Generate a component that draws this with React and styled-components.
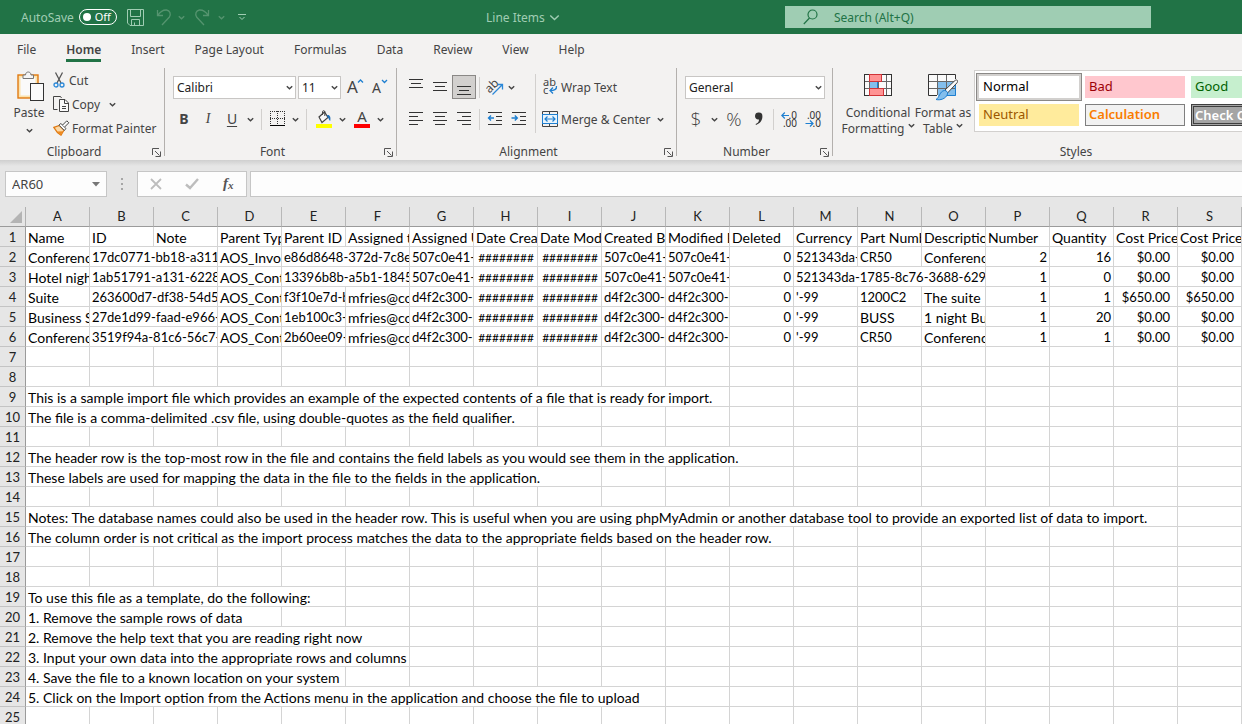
import { useState } from 'react';
import styled, { createGlobalStyle, css } from 'styled-components';

const GlobalStyle = createGlobalStyle`
	* {
		box-sizing: border-box;
	}
	body {
		margin: 0;
		overflow: hidden;
		background: #e6e6e6;
	}
	body, button, input, select {
		font-family: 'Noto Sans', 'Open Sans', sans-serif;
		font-size: 12px;
		color: #444;
	}
	button {
		padding: 0;
		border: none;
		background: none;
	}
`;

const Page = styled.div`
	display: flex;
	flex-direction: column;
	height: 100vh;
	overflow: hidden;
`;

// ---------- title bar ----------
const TitleBar = styled.header`
	display: grid;
	grid-template-columns: 486fr 299fr 366fr 91fr;
	align-items: center;
	flex: none;
	height: 34px;
	background: #217346;
	color: #a0cdb3;
`;

const QuickAccess = styled.div`
	display: flex;
	align-items: center;
	padding-left: 21px;
`;

const AutoSave = styled.label`
	display: flex;
	align-items: center;
	gap: 5px;
	margin-right: 5px;
	position: relative;
`;

const HiddenCheck = styled.input`
	position: absolute;
	opacity: 0;
`;

const Pill = styled.span`
	display: flex;
	align-items: center;
	justify-content: space-between;
	width: 38px;
	height: 16px;
	padding: 0 5px 0 3px;
	border: 1px solid #fff;
	border-radius: 8px;
	color: #fff;
	font-size: 11px;
	line-height: 14px;
	&::before {
		content: '';
		width: 8px;
		height: 8px;
		border-radius: 50%;
		background: #fff;
	}
`;

const QuickButton = styled.button`
	display: flex;
	align-items: center;
	justify-content: center;
	width: ${(props) => props.$w}px;
	height: 24px;
	color: ${(props) => (props.$dim ? '#55946f' : '#a0cdb3')};
`;

const DocTitle = styled.button`
	display: flex;
	align-items: center;
	gap: 4px;
	color: #a0cdb3;
	justify-self: start;
`;

const SearchBox = styled.label`
	display: flex;
	align-items: center;
	gap: 15px;
	height: 22px;
	padding-left: 18px;
	background: #9fcdb3;
	color: #217346;
`;

const SearchInput = styled.input`
	flex: 1;
	min-width: 0;
	border: none;
	outline: none;
	padding: 0;
	background: transparent;
	color: #217346;
	&::placeholder {
		color: #217346;
		opacity: 1;
	}
`;

// ---------- ribbon ----------
const Tabs = styled.nav`
	display: flex;
	flex: none;
	gap: 30px;
	height: 34px;
	padding: 6px 17px 0;
	background: #f3f2f1;
`;

const Tab = styled.button`
	height: 22px;
	line-height: 19px;
	padding-bottom: 3px;
	${(props) =>
		props.$active &&
		css`
			font-weight: 600;
			border-bottom: 3px solid #217346;
			padding-bottom: 0;
		`}
`;

const Ribbon = styled.section`
	display: flex;
	flex: none;
	height: 92px;
	background: #f3f2f1;
	overflow: hidden;
`;

// the divider stops a little above the bottom of the ribbon
const Group = styled.div`
	display: flex;
	flex-direction: column;
	flex: ${(props) => (props.$grow ? `1 0 ${props.$w}px` : `0 0 ${props.$w}px`)};
	height: 92px;
	background: linear-gradient(#b3b0ad, #b3b0ad) right top / 1px 88px no-repeat;
`;

const GroupBody = styled.div`
	display: flex;
	flex: 1;
	padding-left: ${(props) => props.$pad || 0}px;
`;

const GroupFooter = styled.div`
	display: flex;
	align-items: center;
	gap: 4px;
	height: 16px;
	line-height: 16px;
	button {
		display: flex;
		width: 13px;
	}
`;

const GroupLabel = styled.span`
	flex: 1;
	text-align: center;
`;

const Col = styled.div`
	display: flex;
	flex-direction: column;
	gap: ${(props) => props.$gap || 0}px;
	padding-top: ${(props) => props.$top || 0}px;
`;

const Row = styled.div`
	display: flex;
	align-items: center;
	height: 24px;
	padding-left: ${(props) => props.$pad || 0}px;
`;

const Tool = styled.button`
	display: flex;
	align-items: center;
	justify-content: center;
	width: ${(props) => props.$w || 24}px;
	height: 24px;
	${(props) =>
		props.$on &&
		css`
			background: #d2d0ce;
			border: 1px solid #8a8886;
		`}
`;

const Letter = styled.span`
	font-size: 14px;
	line-height: 20px;
	font-weight: ${(props) => (props.$bold ? 700 : 400)};
	font-style: ${(props) => (props.$italic ? 'italic' : 'normal')};
	font-family: ${(props) => (props.$italic ? "'Liberation Serif', serif" : 'inherit')};
	text-decoration: ${(props) => (props.$underline ? 'underline' : 'none')};
	text-underline-offset: 2px;
`;

const Glyph = styled.span`
	font-family: 'Open Sans', sans-serif;
	font-size: 19px;
	font-weight: 300;
	line-height: 24px;
`;

const LabelTool = styled.button`
	display: flex;
	align-items: center;
	gap: ${(props) => props.$gap || 3}px;
	height: 24px;
	white-space: nowrap;
`;

const LabelSplit = styled.div`
	display: flex;
	align-items: center;
`;

const PasteButton = styled.button`
	display: flex;
	flex-direction: column;
	align-items: center;
	width: 46px;
	height: 68px;
	margin: 3px 1px 0 6px;
	line-height: 18px;
	svg:first-child {
		margin-bottom: 2px;
	}
	svg:last-child {
		margin-top: 5px;
	}
`;

const BigTool = styled.button`
	display: flex;
	flex-direction: column;
	align-items: center;
	width: ${(props) => props.$w}px;
	height: 72px;
	padding-top: 5px;
	line-height: 16px;
	white-space: nowrap;
	svg:first-child {
		margin-bottom: 4px;
	}
`;

const Bar = styled.i`
	width: 1px;
	height: ${(props) => props.$h || 21}px;
	margin: 0 ${(props) => props.$m || 3}px;
	background: #d2d0ce;
`;

const SelectWrap = styled.span`
	display: flex;
	position: relative;
	width: ${(props) => props.$w}px;
	margin-right: 2px;
	svg {
		position: absolute;
		right: 3px;
		top: 8px;
		pointer-events: none;
	}
`;

const Select = styled.select`
	appearance: none;
	width: 100%;
	height: 23px;
	padding: 0 3px;
	border: 1px solid #c8c6c4;
	border-radius: 0;
	background: #fff;
	color: #222;
`;

const Gallery = styled.div`
	display: grid;
	grid-template-columns: repeat(3, 100px);
	grid-auto-rows: 22px;
	gap: 6px;
	flex: 1;
	height: 62px;
	margin: 2px 0 0 2px;
	padding: 5px 0 0 4px;
	border: 1px solid #d2d0ce;
	background: #fff;
`;

const StyleCell = styled.button`
	padding: 0 4px 2px;
	font-size: 13px;
	line-height: 18px;
	text-align: left;
	white-space: nowrap;
	overflow: hidden;
	font-weight: ${(props) => (props.$bold ? 600 : 400)};
	background: ${(props) => props.$bg};
	color: ${(props) => props.$color};
	border: ${(props) => props.$border || 'none'};
	padding-left: ${(props) => (props.$border ? 3 : 4)}px;
	outline: ${(props) => (props.$on ? '1px solid #8a8886' : 'none')};
	box-shadow: ${(props) => (props.$on ? '0 0 0 2px #d2d0ce' : 'none')};
	outline-offset: 2px;
`;

const CheckCell = styled(StyleCell)`
	padding: 0 1px;
	line-height: 16px;
`;

// ---------- formula bar ----------
const FormulaBar = styled.div`
	display: flex;
	align-items: center;
	flex: none;
	height: 47px;
	padding: 1px 0 0 5px;
	background: linear-gradient(#cfcfcf, #e6e6e6 6px);
`;

const Box = styled.div`
	display: flex;
	align-items: center;
	height: 26px;
	border: 1px solid #c6c6c6;
	background: #fdfdfd;
`;

const NameBox = styled(Box)`
	width: 102px;
	padding-right: 6px;
`;

const FormulaButtons = styled(Box)`
	width: 110px;
	margin-right: 3px;
`;

const FormulaField = styled(Box)`
	flex: 1;
	border-right: none;
`;

const PlainInput = styled.input`
	flex: 1;
	min-width: 0;
	padding: 0 6px;
	border: none;
	outline: none;
	background: transparent;
	font-size: 13px;
`;

const Dots = styled.svg`
	margin: 0 13px 0 14px;
`;

// ---------- sheet ----------
const Sheet = styled.main`
	flex: 1;
	overflow: hidden;
	background: #fff;
`;

const Grid = styled.table`
	width: 1242px;
	table-layout: fixed;
	border-collapse: separate;
	border-spacing: 0;
	font-family: Lato, 'Open Sans', sans-serif;
	font-size: 13px;
	line-height: 17px;
	color: #000;
`;

const Corner = styled.td`
	height: 20px;
	padding: 0;
	background: #e6e6e6;
	border-right: 1px solid #b1b1b1;
	border-bottom: 1px solid #9b9b9b;
	svg {
		display: block;
		margin: 0 0 0 10px;
	}
`;

const ColHead = styled.th`
	height: 20px;
	padding: 0;
	font-weight: 400;
	color: #222;
	background: #e6e6e6;
	border-right: 1px solid #b8b8b8;
	border-bottom: 1px solid #9b9b9b;
`;

const RowHead = styled.th`
	height: 20px;
	padding: 2px 0 0;
	font-weight: 400;
	color: #222;
	background: #e6e6e6;
	border-right: 1px solid #9b9b9b;
	border-bottom: 1px solid #c4c4c4;
`;

const Cell = styled.td`
	height: 20px;
	padding: 2px ${(props) => props.$right}px 0 2px;
	font-size: ${(props) => props.$size}px;
	text-align: ${(props) => props.$align};
	white-space: nowrap;
	overflow: hidden;
	border-right: 1px solid #d4d4d4;
	border-bottom: 1px solid #d4d4d4;
`;

const letters = 'ABCDEFGHIJKLMNOPQRS'.split('');

// a cell is plain text, or [text, how many columns it runs over]
const rows = {
	1: ['Name', 'ID', 'Note', 'Parent Type', 'Parent ID', 'Assigned to', 'Assigned User', 'Date Created', 'Date Modified', 'Created By', 'Modified By', 'Deleted', 'Currency', 'Part Number', 'Description', 'Number', 'Quantity', 'Cost Price', 'Cost Price'],
	2: ['Conference', ['17dc0771-bb18-a311-', 2], 'AOS_Invoices', ['e86d8648-372d-7c8e', 2], '507c0e41-', '########', '########', '507c0e41-', '507c0e41-', 0, '521343da-', 'CR50', 'Conference', 2, 16, '$0.00', '$0.00'],
	3: ['Hotel night', ['1ab51791-a131-6228-', 2], 'AOS_Contracts', ['13396b8b-a5b1-1845', 2], '507c0e41-', '########', '########', '507c0e41-', '507c0e41-', 0, ['521343da-1785-8c76-3688-6297a', 3], 1, 0, '$0.00', '$0.00'],
	4: ['Suite', ['263600d7-df38-54d5-', 2], 'AOS_Contracts', 'f3f10e7d-b', 'mfries@co', 'd4f2c300-b', '########', '########', 'd4f2c300-b', 'd4f2c300-b', 0, "'-99", '1200C2', 'The suite', 1, 1, '$650.00', '$650.00'],
	5: ['Business S', ['27de1d99-faad-e966-', 2], 'AOS_Contracts', '1eb100c3-', 'mfries@co', 'd4f2c300-b', '########', '########', 'd4f2c300-b', 'd4f2c300-b', 0, "'-99", 'BUSS', '1 night Bu', 1, 20, '$0.00', '$0.00'],
	6: ['Conference', ['3519f94a-81c6-56c7-9', 2], 'AOS_Contracts', '2b60ee09-', 'mfries@co', 'd4f2c300-b', '########', '########', 'd4f2c300-b', 'd4f2c300-b', 0, "'-99", 'CR50', 'Conference', 1, 1, '$0.00', '$0.00'],
	9: [['This is a sample import file which provides an example of the expected contents of a file that is ready for import.', 11]],
	10: [['The file is a comma-delimited .csv file, using double-quotes as the field qualifier.', 8]],
	12: [['The header row is the top-most row in the file and contains the field labels as you would see them in the application.', 12]],
	13: [['These labels are used for mapping the data in the file to the fields in the application.', 9]],
	15: [['Notes: The database names could also be used in the header row. This is useful when you are using phpMyAdmin or another database tool to provide an exported list of data to import.', 18]],
	16: [['The column order is not critical as the import process matches the data to the appropriate fields based on the header row.', 12]],
	19: [['To use this file as a template, do the following:', 5]],
	20: [['1. Remove the sample rows of data', 4]],
	21: [['2. Remove the help text that you are reading right now', 6]],
	22: [['3. Input your own data into the appropriate rows and columns', 6]],
	23: [['4. Save the file to a known location on your system', 5]],
	24: [['5. Click on the Import option from the Actions menu in the application and choose the file to upload', 10]],
};

const cellStyles = [
	{ name: 'Normal', bg: '#fff', color: '#000', on: true },
	{ name: 'Bad', bg: '#ffc7ce', color: '#9c0006' },
	{ name: 'Good', bg: '#c6efce', color: '#006100' },
	{ name: 'Neutral', bg: '#ffeb9c', color: '#9c5700' },
	{ name: 'Calculation', bg: '#f2f2f2', color: '#fa7d00', bold: true, border: '1px solid #7f7f7f' },
	{ name: 'Check Cell', bg: '#a5a5a5', color: '#fff', bold: true, border: '3px double #3f3f3f' },
];

// ---------- icons ----------
function Chevron({ w = 7 }) {
	return (
		<svg width={w} height={w} viewBox='0 0 7 7' fill='none' stroke='currentColor' strokeWidth={w > 8 ? 0.9 : 1.4}>
			<path d='M0.8 2.2 L3.5 4.8 L6.2 2.2' />
		</svg>
	);
}

// horizontal strokes, each [x, y, width]
function Lines({ lines, children }) {
	return (
		<svg width='16' height='16' viewBox='0 0 16 16' shapeRendering='crispEdges'>
			{lines.map(([x, y, w], i) => (
				<rect key={i} x={x + 1} y={y} width={w} height='1' fill='#333' />
			))}
			{children}
		</svg>
	);
}

function Launcher() {
	return (
		<svg width='9' height='9' viewBox='0 0 9 9' fill='none' stroke='#555'>
			<path d='M0.5 7 V0.5 H7' />
			<path d='M3 3 L7.5 7.5 M8.5 3.5 V8.5 H3.5' />
		</svg>
	);
}

function SaveIcon() {
	return (
		<svg width='17' height='17' viewBox='0 0 17 17' fill='none' stroke='currentColor'>
			<path d='M0.5 0.5 H16.5 V16.5 H3 L0.5 14 Z M3.5 0.5 V7.5 H13.5 V0.5 M4.5 16 V10.5 H12.5 V16 M7.5 16 V13.5' />
		</svg>
	);
}

function UndoIcon({ redo }) {
	return (
		<svg width='16' height='17' viewBox='0 0 16 17' fill='none' stroke='currentColor' strokeWidth='1.3'>
			<g transform={redo ? 'matrix(-1 0 0 1 16 0)' : undefined}>
				<path d='M1.5 1 V6.5 H7 M1.8 6.3 C4 3 7 0.8 10.5 1 C14 1.4 15.2 5 13.4 8 L6 16' />
			</g>
		</svg>
	);
}

function PasteIcon() {
	return (
		<svg width='32' height='31' viewBox='-4 0 32 31' fill='none'>
			<rect x='1' y='4' width='20' height='23' fill='#fbe3ae' stroke='#e07a12' strokeWidth='1.4' />
			<rect x='3.5' y='6.5' width='15' height='18' fill='#fafafa' />
			<path d='M6 7.5 V4 H8.5 C8.5 0 14 0 14 4 H16.5 V7.5 Z' fill='#f5f5f5' stroke='#777' />
			<rect x='13.5' y='12.5' width='13' height='17' fill='#fafafa' stroke='#333' />
		</svg>
	);
}

function CutIcon() {
	return (
		<svg width='12' height='16' viewBox='0 0 12 16' fill='none'>
			<path d='M2.5 0.5 L8 11 M9.5 0.5 L4 11' stroke='#555' strokeWidth='1.3' />
			<circle cx='3' cy='13' r='2' stroke='#2b88d8' strokeWidth='1.3' />
			<circle cx='9' cy='13' r='2' stroke='#2b88d8' strokeWidth='1.3' />
		</svg>
	);
}

function CopyIcon() {
	return (
		<svg width='17' height='16' viewBox='0 0 17 16' fill='none' stroke='#444'>
			<path d='M4.5 13.5 H0.5 V0.5 H7.5 L8.5 2' />
			<path d='M6.5 3.5 H12 L15.5 7 V15.5 H6.5 Z' fill='#fafafa' />
			<path d='M11.5 3.5 V7.5 H15.5 M9 10.5 H13 M9 12.5 H13' />
		</svg>
	);
}

function PainterIcon() {
	return (
		<svg width='17' height='16' viewBox='0 0 17 16' fill='none'>
			<path d='M0.8 7.4 L6.5 5.5 L11 10 L8 15.2 C5 13.5 2.5 10.5 0.8 7.4 Z' fill='#fbd9a8' stroke='#e07a12' strokeWidth='1.2' />
			<path d='M4 11.5 L10 11.2 L7.8 15 Z' fill='#ef8a1f' />
			<path d='M6 5.2 L7.8 3.4 L13 8.6 L11.2 10.4 Z' fill='#fafafa' stroke='#444' />
			<path d='M9.6 5 L13.8 0.8 L15.8 2.8 L11.6 7' fill='#fafafa' stroke='#444' />
		</svg>
	);
}

function GrowFont({ down }) {
	return (
		<svg width='18' height='18' viewBox='0 0 18 18'>
			<text x={down ? 2 : 1} y='15' fontSize={down ? 14 : 17} fill='#444'>
				A
			</text>
			<path d={down ? 'M12 2 L14.5 4.5 L17 2' : 'M12 4.5 L14.5 2 L17 4.5'} fill='none' stroke='#1e7fd0' strokeWidth='1.3' />
		</svg>
	);
}

function BorderIcon() {
	return (
		<svg width='16' height='16' viewBox='0 0 16 16' fill='none' stroke='#333' shapeRendering='crispEdges'>
			<path d='M0 0.5 H16 M0 7.5 H16 M0.5 0 V14 M7.5 0 V14 M14.5 0 V14' strokeDasharray='1 1' />
			<path d='M0 14.5 H15' stroke='#000' strokeWidth='1' />
		</svg>
	);
}

function FillIcon() {
	return (
		<svg width='16' height='18' viewBox='0 0 16 18' fill='none'>
			<path d='M3 7 L8.5 2 L12 7.5 L6 12.5 Z' fill='#fafafa' stroke='#444' strokeWidth='1.2' />
			<path d='M6.5 5 V1.5 C6.5 0.5 8.8 0.5 8.8 1.5 V6' stroke='#444' />
			<path d='M11 5 C14 4.5 15 7 14.2 11 C13 10.5 12.8 8 11.5 7' fill='#1e6fb8' />
			<rect y='14' width='16' height='4' fill='#ffff00' />
		</svg>
	);
}

function FontColorIcon() {
	return (
		<svg width='16' height='18' viewBox='0 0 16 18'>
			<text x='8' y='12' textAnchor='middle' fontSize='15' fill='#444'>
				A
			</text>
			<rect y='14' width='16' height='4' fill='#ff0000' />
		</svg>
	);
}

function OrientIcon() {
	return (
		<svg width='18' height='18' viewBox='0 0 18 18' fill='none'>
			<text x='0' y='13' fontSize='12' fill='#444' transform='rotate(-45 5 10)'>
				ab
			</text>
			<path d='M6.5 16.5 L16 7 M11.5 6.5 H16.5 V11.5' stroke='#2b88d8' strokeWidth='1.3' />
		</svg>
	);
}

function WrapIcon() {
	return (
		<svg width='16' height='18' viewBox='0 0 16 18' fill='none'>
			<text x='1' y='8' fontSize='11' fill='#444'>
				ab
			</text>
			<text x='1' y='16' fontSize='11' fill='#444'>
				c
			</text>
			<path d='M14.5 8 C15 11.5 12 12.5 8 12.5 M11 9.5 L8 12.5 L11 15.5' stroke='#1e7fd0' strokeWidth='1.3' />
		</svg>
	);
}

function MergeIcon() {
	return (
		<svg width='16' height='16' viewBox='0 0 16 16' fill='none'>
			<path d='M0.5 0.5 H15.5 V15.5 H0.5 Z M7.5 0.5 V4 M7.5 12 V15.5' stroke='#444' />
			<rect x='0.5' y='3.5' width='15' height='9' fill='#e9f4fc' stroke='#1e7fd0' />
			<path d='M3 8 H13 M5.5 5.5 L3 8 L5.5 10.5 M10.5 5.5 L13 8 L10.5 10.5' stroke='#1e7fd0' strokeWidth='1.2' />
		</svg>
	);
}

function DecimalIcon({ less }) {
	return (
		<svg width='17' height='17' viewBox='0 0 17 17' fill='none'>
			<text x='16' y='8' textAnchor='end' fontSize='10' fill='#333'>
				{less ? '.00' : '.0'}
			</text>
			<text x='16' y='16' textAnchor='end' fontSize='10' fill='#333'>
				{less ? '.0' : '.00'}
			</text>
			<path
				d={less ? 'M0.5 12.5 H8 M5 9.5 L8 12.5 L5 15.5' : 'M8 4.5 H0.8 M3.8 1.5 L0.8 4.5 L3.8 7.5'}
				stroke='#1e7fd0'
				strokeWidth='1.2'
			/>
		</svg>
	);
}

function CommaIcon() {
	return (
		<svg width='10' height='14' viewBox='0 0 10 14'>
			<path d='M1 4 A3.6 3.6 0 1 1 8.4 4.5 C8.4 8.5 6 11.5 2 13 L1.6 12 C4 10.8 5 9.5 5 7.4 C3 8 1 6.5 1 4 Z' fill='#333' />
		</svg>
	);
}

function CondIcon() {
	return (
		<svg width='28' height='28' viewBox='0 0 28 28' fill='none' shapeRendering='crispEdges'>
			<rect x='0.5' y='1.5' width='27' height='21' fill='#fafafa' />
			<path d='M0.5 8.5 H27 M0.5 15.5 H27 M5.5 1.5 V22 M14.5 1.5 V22 M22.5 1.5 V22' stroke='#666' />
			<rect x='0.5' y='1.5' width='27' height='21' stroke='#333' />
			<rect x='5.5' y='1.5' width='12' height='7' fill='#ff9494' stroke='#d13438' />
			<rect x='6' y='9' width='7' height='6' fill='#83beec' />
			<path d='M13.5 9 V15' stroke='#1e7fd0' />
			<rect x='5.5' y='15.5' width='14' height='7' fill='#ff9494' stroke='#d13438' />
		</svg>
	);
}

function TableIcon() {
	return (
		<svg width='30' height='28' viewBox='0 0 30 28' fill='none'>
			<rect x='0.5' y='1.5' width='27' height='21' fill='#fafafa' />
			<rect x='10' y='9' width='18' height='14' fill='#83beec' />
			<path d='M0.5 8.5 H27 M0.5 15.5 H27 M9.5 1.5 V22 M18.5 1.5 V22' stroke='#666' />
			<path d='M27.5 6 V1.5 H0.5 V22.5 H9' stroke='#333' />
			<path d='M27.5 12 V22.5 H18' stroke='#1e7fd0' />
			<path d='M17 17 L27 7.5 C29 6 30.5 8 29 9.8 L19.5 20 Z' fill='#fafafa' stroke='#444' />
			<path d='M16.5 17.5 C18.5 17.5 20 19 19.5 21 C18 26 12 27.5 8 26.5 C11.5 25 11.5 18 16.5 17.5 Z' fill='#83beec' stroke='#1e7fd0' />
		</svg>
	);
}

function RibbonGroup({ label, w, pad, grow, children }) {
	return (
		<Group $w={w} $grow={grow}>
			<GroupBody $pad={pad}>{children}</GroupBody>
			<GroupFooter>
				<GroupLabel>{label}</GroupLabel>
				{!grow && (
					<button aria-label={`${label} settings`}>
						<Launcher />
					</button>
				)}
			</GroupFooter>
		</Group>
	);
}

function Dropdown({ label, w, options }) {
	return (
		<SelectWrap $w={w}>
			<Select aria-label={label}>
				{options.map((o) => (
					<option key={o}>{o}</option>
				))}
			</Select>
			<Chevron />
		</SelectWrap>
	);
}

function More({ label, w = 12 }) {
	return (
		<Tool $w={w} aria-label={label}>
			<Chevron />
		</Tool>
	);
}

function SheetRow({ num }) {
	const cells = (rows[num] || []).map((c) => (Array.isArray(c) ? { text: c[0], span: c[1] } : { text: c, span: 1 }));
	let used = cells.reduce((sum, c) => sum + c.span, 0);
	while (used < letters.length) {
		cells.push({ text: '', span: 1 });
		used++;
	}
	return (
		<tr>
			<RowHead scope='row'>{num}</RowHead>
			{cells.map((c, i) => {
				let align = 'left';
				let right = 0;
				// ids, codes and numbers are set a size smaller than words
				let size = /^\S*\d\S*$/.test(c.text) ? 13 : 14;
				if (typeof c.text === 'number') {
					align = 'right';
					right = 2;
				}
				if (String(c.text).startsWith('$')) {
					align = 'right';
					right = 7;
				}
				if (c.text === '########') {
					align = 'center';
					right = 1;
					size = 12;
				}
				return (
					<Cell key={i} colSpan={c.span} $align={align} $right={right} $size={size}>
						{c.text}
					</Cell>
				);
			})}
		</tr>
	);
}

function App() {
	const [autoSave, setAutoSave] = useState(false);
	const [tab, setTab] = useState('Home');
	const [style, setStyle] = useState('Normal');

	return (
		<Page>
			<GlobalStyle />
			<TitleBar>
				<QuickAccess>
					<AutoSave>
						AutoSave
						<HiddenCheck type='checkbox' checked={autoSave} onChange={() => setAutoSave(!autoSave)} />
						<Pill>{autoSave ? 'On' : 'Off'}</Pill>
					</AutoSave>
					<QuickButton $w={28} aria-label='Save'>
						<SaveIcon />
					</QuickButton>
					<QuickButton $dim $w={28} aria-label='Undo'>
						<UndoIcon />
					</QuickButton>
					<QuickButton $dim $w={8} aria-label='Undo list'>
						<Chevron />
					</QuickButton>
					<QuickButton $dim $w={32} aria-label='Redo'>
						<UndoIcon redo />
					</QuickButton>
					<QuickButton $dim $w={8} aria-label='Redo list'>
						<Chevron />
					</QuickButton>
					<QuickButton $w={32} aria-label='Customize toolbar'>
						<svg width='8' height='8' viewBox='0 0 8 8' fill='none' stroke='currentColor'>
							<path d='M0 1.5 H8 M1.5 4 L4 6.5 L6.5 4' />
						</svg>
					</QuickButton>
				</QuickAccess>
				<DocTitle>
					Line Items
					<Chevron w={11} />
				</DocTitle>
				<SearchBox>
					<svg width='16' height='16' viewBox='0 0 16 16' fill='none' stroke='#217346' strokeWidth='1.2'>
						<circle cx='9.5' cy='5.5' r='4.5' />
						<path d='M6.5 9 L0.8 15' />
					</svg>
					<SearchInput aria-label='Search' placeholder='Search (Alt+Q)' />
				</SearchBox>
			</TitleBar>

			<Tabs>
				{['File', 'Home', 'Insert', 'Page Layout', 'Formulas', 'Data', 'Review', 'View', 'Help'].map((name) => (
					<Tab key={name} $active={tab === name} onClick={() => setTab(name)}>
						{name}
					</Tab>
				))}
			</Tabs>

			<Ribbon>
				<RibbonGroup label='Clipboard' w={165}>
					<PasteButton>
						<PasteIcon />
						Paste
						<Chevron />
					</PasteButton>
					<Col>
						<LabelTool $gap={4}>
							<CutIcon />
							Cut
						</LabelTool>
						<LabelSplit>
							<LabelTool $gap={2}>
								<CopyIcon />
								Copy
							</LabelTool>
							<More label='Copy options' w={24} />
						</LabelSplit>
						<LabelTool $gap={2}>
							<PainterIcon />
							Format Painter
						</LabelTool>
					</Col>
				</RibbonGroup>

				<RibbonGroup label='Font' w={232} pad={7}>
					<Col $gap={8} $top={7}>
						<Row $pad={1}>
							<Dropdown label='Font' w={123} options={['Calibri', 'Arial']} />
							<Dropdown label='Font size' w={43} options={['11', '12', '14']} />
							<Tool aria-label='Increase font size'>
								<GrowFont />
							</Tool>
							<Tool aria-label='Decrease font size'>
								<GrowFont down />
							</Tool>
						</Row>
						<Row>
							<Tool>
								<Letter $bold>B</Letter>
							</Tool>
							<Tool>
								<Letter $italic>I</Letter>
							</Tool>
							<Tool>
								<Letter $underline>U</Letter>
							</Tool>
							<More label='Underline options' />
							<Bar $m={5} />
							<Tool $w={22} aria-label='Borders'>
								<BorderIcon />
							</Tool>
							<More label='Border options' />
							<Bar $m={5} />
							<Tool aria-label='Fill color'>
								<FillIcon />
							</Tool>
							<More label='Fill options' />
							<Tool $w={28} aria-label='Font color'>
								<FontColorIcon />
							</Tool>
							<More label='Font color options' w={8} />
						</Row>
					</Col>
				</RibbonGroup>

				<RibbonGroup label='Alignment' w={280} pad={7}>
					<Col $gap={8} $top={7}>
						<Row>
							<Tool aria-label='Top align'>
								<Lines lines={[[0, 0, 14], [2, 4, 10], [0, 8, 14]]} />
							</Tool>
							<Tool aria-label='Middle align'>
								<Lines lines={[[0, 3, 14], [2, 7, 10], [0, 11, 14]]} />
							</Tool>
							<Tool $on aria-label='Bottom align'>
								<Lines lines={[[0, 7, 14], [2, 11, 10], [0, 15, 14]]} />
							</Tool>
							<Bar />
							<Tool aria-label='Orientation'>
								<OrientIcon />
							</Tool>
							<More label='Orientation options' w={8} />
						</Row>
						<Row>
							<Tool aria-label='Align left'>
								<Lines lines={[[0, 1, 14], [0, 5, 9], [0, 9, 14], [0, 13, 9]]} />
							</Tool>
							<Tool aria-label='Center'>
								<Lines lines={[[0, 1, 14], [2, 5, 10], [0, 9, 14], [2, 13, 10]]} />
							</Tool>
							<Tool aria-label='Align right'>
								<Lines lines={[[0, 1, 14], [5, 5, 9], [0, 9, 14], [5, 13, 9]]} />
							</Tool>
							<Bar />
							<Tool aria-label='Decrease indent'>
								<Lines lines={[[0, 1, 14], [8, 5, 6], [8, 9, 6], [0, 13, 14]]}>
									<path d='M7 7 H2 M4 4.5 L1.5 7 L4 9.5' fill='none' stroke='#1e7fd0' strokeWidth='1.4' shapeRendering='auto' />
								</Lines>
							</Tool>
							<Tool aria-label='Increase indent'>
								<Lines lines={[[0, 1, 14], [8, 5, 6], [8, 9, 6], [0, 13, 14]]}>
									<path d='M0.5 7 H6 M3.8 4.5 L6.3 7 L3.8 9.5' fill='none' stroke='#1e7fd0' strokeWidth='1.4' shapeRendering='auto' />
								</Lines>
							</Tool>
						</Row>
					</Col>
					<Col $top={6}>
						<Bar $h={59} $m={4} />
					</Col>
					<Col $gap={8} $top={7}>
						<Row $pad={2}>
							<LabelTool>
								<WrapIcon />
								Wrap Text
							</LabelTool>
						</Row>
						<Row $pad={2}>
							<LabelTool>
								<MergeIcon />
								Merge &amp; Center
							</LabelTool>
							<More label='Merge options' w={20} />
						</Row>
					</Col>
				</RibbonGroup>

				<RibbonGroup label='Number' w={156} pad={7}>
					<Col $gap={8} $top={7}>
						<Row $pad={1}>
							<Dropdown label='Number format' w={140} options={['General', 'Number', 'Currency']} />
						</Row>
						<Row>
							<Tool aria-label='Accounting format'>
								<Glyph>$</Glyph>
							</Tool>
							<More label='Currency options' />
							<Tool $w={28} aria-label='Percent'>
								<Glyph>%</Glyph>
							</Tool>
							<Tool $w={22} aria-label='Comma style'>
								<CommaIcon />
							</Tool>
							<Bar />
							<Tool aria-label='Increase decimal'>
								<DecimalIcon />
							</Tool>
							<Tool aria-label='Decrease decimal'>
								<DecimalIcon less />
							</Tool>
						</Row>
					</Col>
				</RibbonGroup>

				<RibbonGroup label='Styles' w={486} pad={9} grow>
					<BigTool $w={72}>
						<CondIcon />
						<span>Conditional</span>
						<span>
							Formatting <Chevron />
						</span>
					</BigTool>
					<BigTool $w={58}>
						<TableIcon />
						<span>Format as</span>
						<span>
							Table <Chevron />
						</span>
					</BigTool>
					<Gallery>
						{cellStyles.map((s) => {
							const Item = s.name === 'Check Cell' ? CheckCell : StyleCell;
							return (
								<Item
									key={s.name}
									$bg={s.bg}
									$color={s.color}
									$bold={s.bold}
									$border={s.border}
									$on={style === s.name}
									onClick={() => setStyle(s.name)}>
									{s.name}
								</Item>
							);
						})}
					</Gallery>
				</RibbonGroup>
			</Ribbon>

			<FormulaBar>
				<NameBox>
					<PlainInput aria-label='Name box' defaultValue='AR60' />
					<svg width='8' height='5' viewBox='0 0 8 5'>
						<path d='M0 0 H8 L4 4.5 Z' fill='#777' />
					</svg>
				</NameBox>
				<Dots width='3' height='12' viewBox='0 0 3 12' fill='#a6a6a6'>
					<rect width='2' height='2' />
					<rect y='5' width='2' height='2' />
					<rect y='10' width='2' height='2' />
				</Dots>
				<FormulaButtons>
					<Tool $w={36} aria-label='Cancel'>
						<svg width='12' height='12' viewBox='0 0 12 12' stroke='#bdbdbd' strokeWidth='1.8'>
							<path d='M1 1 L11 11 M11 1 L1 11' />
						</svg>
					</Tool>
					<Tool $w={36} aria-label='Enter'>
						<svg width='14' height='12' viewBox='0 0 14 12' fill='none' stroke='#bdbdbd' strokeWidth='2.4'>
							<path d='M1 6.5 L5 10 L13 1' />
						</svg>
					</Tool>
					<Tool $w={36} aria-label='Insert function'>
						<svg width='14' height='16' viewBox='0 0 14 16' fill='#555' fontFamily='Liberation Serif' fontStyle='italic' fontWeight='700'>
							<text x='2' y='12' fontSize='15'>
								f
							</text>
							<text x='7' y='13' fontSize='11'>
								x
							</text>
						</svg>
					</Tool>
				</FormulaButtons>
				<FormulaField>
					<PlainInput aria-label='Formula' />
				</FormulaField>
			</FormulaBar>

			<Sheet>
				<Grid>
					<colgroup>
						<col style={{ width: 26 }} />
						{letters.map((l) => (
							<col key={l} style={{ width: 64 }} />
						))}
					</colgroup>
					<thead>
						<tr>
							<Corner>
								<svg width='12' height='12' viewBox='0 0 12 12'>
									<path d='M12 0 V12 H0 Z' fill='#b4b4b4' />
								</svg>
							</Corner>
							{letters.map((l) => (
								<ColHead key={l} scope='col'>
									{l}
								</ColHead>
							))}
						</tr>
					</thead>
					<tbody>
						{Array.from({ length: 25 }, (_, i) => (
							<SheetRow key={i} num={i + 1} />
						))}
					</tbody>
				</Grid>
			</Sheet>
		</Page>
	);
}

export default App;
